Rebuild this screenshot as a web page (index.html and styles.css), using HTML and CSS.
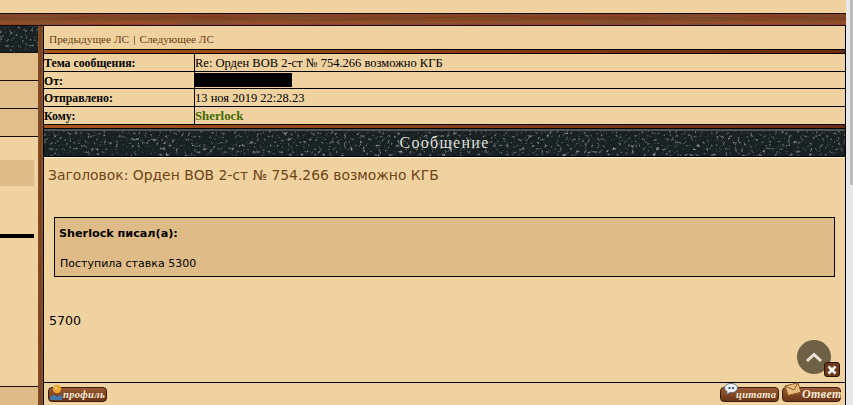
FILE: index.html
```html
<!DOCTYPE html>
<html lang="ru">
<head>
<meta charset="utf-8">
<title>Сообщение</title>
<link rel="stylesheet" href="styles.css">
</head>
<body>
<div class="page">
  <div class="site">
    <div class="top-band"></div>
    <div class="wood-bar"></div>
    <div class="main">
      <aside class="side">
        <div class="side-head"></div>
        <div class="side-row"></div>
        <div class="side-row"></div>
        <div class="side-row"></div>
        <div class="side-plain">
          <div class="side-mark"></div>
          <div class="side-rule"></div>
        </div>
        <div class="side-foot"></div>
      </aside>
      <div class="divider"></div>
      <main class="content">
        <nav class="pm-nav"><a>Предыдущее ЛС</a><span class="sep">|</span><a>Следующее ЛС</a></nav>
        <div class="wood-strip"></div>
        <div class="meta">
          <div class="meta-k">Тема сообщения:</div><div class="meta-v">Re: Орден ВОВ 2-ст № 754.266 возможно КГБ</div>
          <div class="meta-k">От:</div><div class="meta-v"><span class="redact"></span></div>
          <div class="meta-k">Отправлено:</div><div class="meta-v">13 ноя 2019 22:28.23</div>
          <div class="meta-k">Кому:</div><div class="meta-v"><b class="user">Sherlock</b></div>
        </div>
        <div class="wood-strip"></div>
        <h2 class="msg-head">Сообщение</h2>
        <section class="msg">
          <h3 class="subject">Заголовок: Орден ВОВ 2-ст № 754.266 возможно КГБ</h3>
          <blockquote class="quote">
            <div class="quote-by">Sherlock писал(а):</div>
            <div class="quote-text">Поступила ставка 5300</div>
          </blockquote>
          <p class="reply">5700</p>
          <div class="float-wrap">
            <span class="to-top"><svg viewBox="0 0 34 34" width="34" height="34"><path d="M10 21 17 14.500 24 21" fill="none" stroke="#ece5d6" stroke-width="3"/></svg></span>
            <span class="close-x"><svg viewBox="0 0 10 10" width="10" height="10"><path d="M1.500 1.500l7 7M8.500 1.500l-7 7" stroke="#fff" stroke-width="2.600"/></svg></span>
          </div>
        </section>
        <footer class="actions">
          <a class="btn btn-profile">
            <svg class="ico ico-prof" viewBox="0 0 14 16" width="14" height="16"><circle cx="8" cy="5" r="4.200" fill="#eda52f"/><circle cx="7" cy="4" r="1.600" fill="#f9d27a"/><path d="M1 16c0-4 2-5 4-5s2 2 3 2 1-2 3-2 2 2 2 5z" fill="#3f79ad"/></svg>
            <span>профиль</span>
          </a>
          <span class="actions-right">
            <a class="btn btn-quote">
              <svg class="ico ico-quote" viewBox="0 0 14 12" width="14" height="12"><path d="M7 .5c3.600 0 6.500 2 6.500 4.600S10.600 9.700 7 9.700H5.500L2.500 11.500l.6-3C1.500 7.600.5 6.500.5 5.100.5 2.500 3.400.5 7 .5z" fill="#eef1f2" stroke="#5a6a75"/><path d="M4.500 4h2v2h-2zM8 4h2v2H8z" fill="#3c5a7a"/></svg>
              <span>цитата</span>
            </a>
            <a class="btn btn-reply">
              <svg class="ico ico-mail" viewBox="0 0 18 14" width="18" height="14"><path d="M1 4 14 .8l3 9.400L4 13.400z" fill="#e9bd7d" stroke="#8a5a2a"/><path d="M1 4l9 4 4-7.200" fill="none" stroke="#8a5a2a"/></svg>
              <span>Ответ</span>
            </a>
          </span>
        </footer>
      </main>
    </div>
  </div>
  <div class="scrollbar"><div class="thumb"></div></div>
</div>
</body>
</html>
```
FILE: styles.css
```css
* { box-sizing: border-box; }
html, body { margin: 0; height: 405px; overflow: hidden; background: #f0d2a0; }
body { font-family: "Liberation Serif", serif; color: #000; }
.page { display: flex; width: 853px; height: 405px; }
.site { width: 846px; display: flex; flex-direction: column; }
.scrollbar { width: 7px; background: #e8e8e8; padding-left: 4px; }
.thumb { height: 185px; background: #bdbdbd; }

.top-band { height: 13px; background: #f0d2a0; }
.wood-bar {
  height: 13px;
  border-top: 1px solid #1a0a04;
  border-bottom: 1px solid #1a0a04;
  background:
    url("data:image/svg+xml,%3Csvg xmlns='http://www.w3.org/2000/svg' width='846' height='13'%3E%3Cfilter id='n'%3E%3CfeTurbulence type='fractalNoise' baseFrequency='0.012 0.55' numOctaves='3'/%3E%3CfeColorMatrix values='0 0 0 0 .2 0 0 0 0 .08 0 0 0 0 .03 2.4 0 0 0 -.85'/%3E%3C/filter%3E%3Crect width='846' height='13' filter='url(%23n)'/%3E%3C/svg%3E"),
    linear-gradient(180deg, #8a4020 0%, #7c3c1c 45%, #a2512a 80%, #8a3a1d 100%);
}
.main { flex: 1; display: flex; min-height: 0; }

.side { width: 38px; display: flex; flex-direction: column; }
.side-head {
  height: 27px;
  border-bottom: 1px solid #1a0a04;
  background:
    url("data:image/svg+xml,%3Csvg xmlns='http://www.w3.org/2000/svg' width='400' height='30'%3E%3Cfilter id='n'%3E%3CfeTurbulence type='fractalNoise' baseFrequency='0.32' numOctaves='4'/%3E%3CfeColorMatrix values='0 0 0 0 .5 0 0 0 0 .53 0 0 0 0 .52 2.6 0 0 0 -1.5'/%3E%3C/filter%3E%3Crect width='400' height='30' filter='url(%23n)'/%3E%3C/svg%3E"),
    #192222;
}
.side-row { height: 28px; background: #e1bf8b; border-bottom: 1px solid #1a0a04; }
.side-plain { height: 249px; padding-top: 23px; display: flex; flex-direction: column; }
.side-mark { width: 34px; height: 26px; background: #dfbc87; }
.side-rule { width: 34px; height: 4px; margin-top: 48px; background: #000; }
.side-foot { flex: 1; border-top: 1px solid #1a0a04; background: #dfbc87; }

.divider {
  width: 5px;
  background:
    url("data:image/svg+xml,%3Csvg xmlns='http://www.w3.org/2000/svg' width='5' height='380'%3E%3Cfilter id='n'%3E%3CfeTurbulence type='fractalNoise' baseFrequency='0.5 0.04' numOctaves='3'/%3E%3CfeColorMatrix values='0 0 0 0 .2 0 0 0 0 .08 0 0 0 0 .03 2 0 0 0 -.8'/%3E%3C/filter%3E%3Crect width='5' height='380' filter='url(%23n)'/%3E%3C/svg%3E"),
    linear-gradient(90deg, #8e5024, #754019 50%, #965a2c);
}

.content { flex: 1; min-width: 0; display: flex; flex-direction: column; border-right: 1px solid #000; border-left: 1px solid #000; }
.pm-nav {
  height: 23px;
  padding: 6px 5px 0;
  font-size: 11.300px;
  line-height: 14px;
  color: #6b3c12;
  background: #f0d2a0;
  white-space: nowrap;
}
.sep { margin: 0 4px; color: #2a1406; }
.wood-strip {
  height: 5px;
  border-top: 1px solid #000;
  border-bottom: 1px solid #000;
  background: linear-gradient(90deg, #a8541d, #7b3518 70%, #6b2c16);
}
.meta {
  display: grid;
  grid-template-columns: 150px 1fr;
  grid-auto-rows: 17.500px;
  background: #f0d2a0;
  font-size: 12.500px;
  line-height: 16px;
}
.meta-k { font-weight: 700; font-size: 11.800px; padding-top: 1px; border-bottom: 1px solid #000; white-space: nowrap; }
.meta-v { border-left: 1px solid #000; border-bottom: 1px solid #000; padding-top: 1px; display: flex; align-items: center; white-space: nowrap; }
.meta-k:nth-last-child(2), .meta-v:last-child { border-bottom: 0; }
.redact { display: block; width: 97px; height: 14px; background: #000; }
.user { color: #3f6a00; font-size: 12.800px; }

.msg-head {
  margin: 0;
  height: 28px;
  border-bottom: 1px solid #000;
  background:
    url("data:image/svg+xml,%3Csvg xmlns='http://www.w3.org/2000/svg' width='802' height='28'%3E%3Cfilter id='n'%3E%3CfeTurbulence type='fractalNoise' baseFrequency='0.32' numOctaves='4'/%3E%3CfeColorMatrix values='0 0 0 0 .5 0 0 0 0 .53 0 0 0 0 .52 2.6 0 0 0 -1.5'/%3E%3C/filter%3E%3Crect width='802' height='28' filter='url(%23n)'/%3E%3C/svg%3E"),
    #192222;
  box-shadow: inset 0 2px 0 #4c5654;
  color: #dededa;
  font-size: 16px;
  font-weight: 400;
  letter-spacing: 1.300px;
  line-height: 27px;
  text-align: center;
}
.msg { position: relative; flex: 1; min-height: 0; border-top: 1px solid #fff3dc; background: #f0d2a0; padding: 8px 4px 0; }
.subject {
  margin: 0;
  font-family: "DejaVu Sans", sans-serif;
  font-size: 13.900px;
  font-weight: 400;
  line-height: 18px;
  color: #6f4419;
  white-space: nowrap;
}
.quote {
  margin: 33px 6px 0;
  height: 60px;
  border: 1px solid #000;
  background: #dfbc87;
  padding: 8px 4px;
  font-family: "DejaVu Sans", sans-serif;
}
.quote-by { font-size: 11.200px; font-weight: 700; line-height: 15px; }
.quote-text { margin-top: 16px; padding-left: 1px; font-size: 11px; line-height: 14px; }
.reply { margin: 35px 0 0 1px; font-family: "DejaVu Sans", sans-serif; font-size: 12.600px; line-height: 18px; }
.float-wrap { position: absolute; right: 5px; bottom: 5px; width: 43px; height: 37px; }
.to-top { position: absolute; left: 0; top: 0; width: 34px; height: 34px; border-radius: 50%; background: #6e6146; }
.to-top svg, .close-x svg { display: block; }
.close-x {
  position: absolute; right: 0; bottom: 0; width: 16px; height: 15px;
  display: flex; align-items: center; justify-content: center;
  border-radius: 3px; border: 1px solid #2a1406; background: #6b3a1c;
}
.actions {
  height: 23px;
  border-top: 1px solid #000;
  background: #f0d2a0;
  padding: 4px 4px 0;
  display: flex;
  justify-content: space-between;
  align-items: flex-start;
}
.actions-right { display: flex; gap: 3px; }
.btn {
  position: relative;
  display: block;
  height: 15px;
  border-radius: 4px;
  border: 1px solid #3a1c0a;
  background: linear-gradient(180deg, #9a5a30, #6b3517);
  color: #f7ecd8;
  font-style: italic;
  font-weight: 700;
  font-size: 10.500px;
  line-height: 13px;
  white-space: nowrap;
}
.btn-profile { width: 59px; padding-left: 14px; letter-spacing: .3px; }
.btn-quote { width: 59px; padding-left: 15px; letter-spacing: .3px; }
.btn-reply { width: 59px; padding-left: 19px; font-size: 12px; letter-spacing: .4px; }
.ico { position: absolute; display: block; }
.ico-prof { left: 0; top: -4px; }
.ico-quote { left: 3px; top: -5px; }
.ico-mail { left: 1px; top: -6px; }
```
